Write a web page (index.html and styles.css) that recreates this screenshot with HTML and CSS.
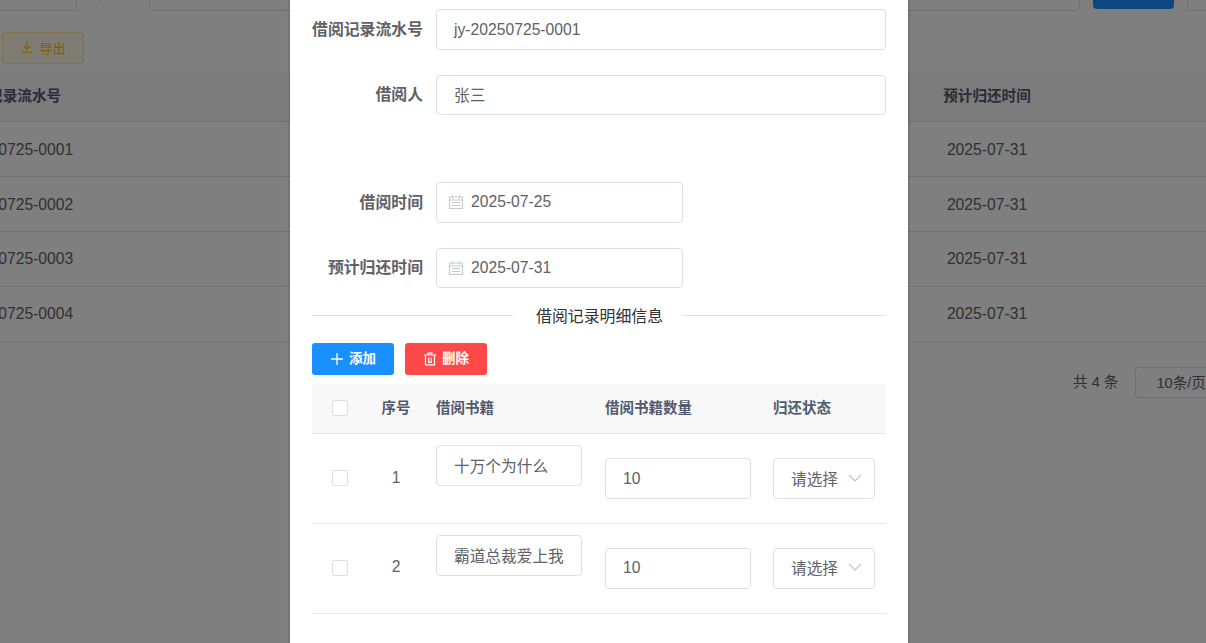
FILE: index.html
```html
<!DOCTYPE html>
<html lang="zh">
<head>
<meta charset="utf-8">
<title>借阅记录</title>
<link rel="stylesheet" href="styles.css">
</head>
<body>
<div class="page">
  <div class="bg">
    <div class="search">
      <div class="s-input s-first"></div>
      <span class="s-label">借阅人</span>
      <div class="s-input s-grow"></div>
      <div class="s-btn"></div>
      <div class="s-input s-last"></div>
    </div>
    <div class="tools">
      <button class="export">
        <svg class="ic" viewBox="0 0 14 14"><path d="M7 1.5v7.5M3.8 6L7 9.2 10.2 6M2 12.3h10" fill="none" stroke="currentColor" stroke-width="1.1"/></svg>
        <span>导出</span>
      </button>
    </div>
    <div class="tbl">
      <div class="tr th"><div class="c1">借阅记录流水号</div><div class="c2"></div><div class="c3">预计归还时间</div></div>
      <div class="tr"><div class="c1">jy-20250725-0001</div><div class="c2"></div><div class="c3">2025-07-31</div></div>
      <div class="tr"><div class="c1">jy-20250725-0002</div><div class="c2"></div><div class="c3">2025-07-31</div></div>
      <div class="tr"><div class="c1">jy-20250725-0003</div><div class="c2"></div><div class="c3">2025-07-31</div></div>
      <div class="tr"><div class="c1">jy-20250725-0004</div><div class="c2"></div><div class="c3">2025-07-31</div></div>
    </div>
    <div class="pager">
      <span class="p-total">共 4 条</span>
      <div class="p-size">10条/页</div>
    </div>
  </div>

  <div class="overlay"></div>

  <div class="dialog">
    <div class="row r1"><label>借阅记录流水号</label><div class="field">jy-20250725-0001</div></div>
    <div class="row r2"><label>借阅人</label><div class="field">张三</div></div>
    <div class="row r3"><label>借阅时间</label>
      <div class="field date">
        <svg class="cal" viewBox="0 0 16 16"><path d="M1.5 3h13v11.5h-13zM1.5 6h13M4.5 1v3.5M11.5 1v3.5M4 8.5h8M4 11.5h8" fill="none" stroke="#c8cad2" stroke-width="1.1"/></svg>
        <span>2025-07-25</span>
      </div>
    </div>
    <div class="row r4"><label>预计归还时间</label>
      <div class="field date">
        <svg class="cal" viewBox="0 0 16 16"><path d="M1.5 3h13v11.5h-13zM1.5 6h13M4.5 1v3.5M11.5 1v3.5M4 8.5h8M4 11.5h8" fill="none" stroke="#c8cad2" stroke-width="1.1"/></svg>
        <span>2025-07-31</span>
      </div>
    </div>
    <div class="divider"><span>借阅记录明细信息</span></div>
    <div class="btns">
      <button class="btn add">
        <svg class="ic" viewBox="0 0 14 14"><path d="M7 1v12M1 7h12" fill="none" stroke="currentColor" stroke-width="1.3"/></svg>
        <span>添加</span>
      </button>
      <button class="btn del">
        <svg class="ic" viewBox="0 0 14 14"><path d="M1 3h12M5 3V1.2h4V3M2.5 3v9.8h9V3M5.7 5.5v4.8h2.6V5.5" fill="none" stroke="currentColor" stroke-width="1.2"/></svg>
        <span>删除</span>
      </button>
    </div>
    <div class="d-table">
      <div class="d-row d-head">
        <div class="d-check"><i class="box"></i></div>
        <div class="d-no">序号</div>
        <div class="d-book">借阅书籍</div>
        <div class="d-qty">借阅书籍数量</div>
        <div class="d-state">归还状态</div>
      </div>
      <div class="d-row d-body">
        <div class="d-check"><i class="box"></i></div>
        <div class="d-no">1</div>
        <div class="d-book"><div class="cell-input up">十万个为什么</div></div>
        <div class="d-qty"><div class="cell-input">10</div></div>
        <div class="d-state"><div class="sel"><span class="sel-text">请选择</span><svg class="chev" viewBox="0 0 14 14"><path d="M1 4l6 6 6-6" fill="none" stroke="#c0c4cc" stroke-width="1.2"/></svg></div></div>
      </div>
      <div class="d-row d-body">
        <div class="d-check"><i class="box"></i></div>
        <div class="d-no">2</div>
        <div class="d-book"><div class="cell-input up">霸道总裁爱上我</div></div>
        <div class="d-qty"><div class="cell-input">10</div></div>
        <div class="d-state"><div class="sel"><span class="sel-text">请选择</span><svg class="chev" viewBox="0 0 14 14"><path d="M1 4l6 6 6-6" fill="none" stroke="#c0c4cc" stroke-width="1.2"/></svg></div></div>
      </div>
    </div>
  </div>
</div>
</body>
</html>
```
FILE: styles.css
```css
* { box-sizing: border-box; }
html, body { margin: 0; height: 100%; overflow: hidden; }
body { font-family: "Liberation Sans", "Noto Sans CJK SC", sans-serif; color: #606266; background: #fff; }
.page { position: relative; width: 1206px; height: 643px; overflow: hidden; }

/* page behind the mask */
.bg { width: 1500px; margin-left: -60px; }
.search { display: flex; align-items: flex-start; height: 41px; margin-top: -30px; }
.s-input { height: 41px; border: 1px solid #dcdfe6; border-radius: 5px; background: #fff; }
.s-first { width: 137px; }
.s-label { width: 64px; margin-left: 8px; padding-top: 13px; font-size: 16px; line-height: 20px; font-weight: 700; text-align: center; color: #606266; white-space: nowrap; }
.s-grow { width: 931px; }
.s-btn { width: 81px; height: 39px; margin-left: 13px; background: #1890ff; border-radius: 4px; }
.s-last { width: 120px; margin-left: 13px; }
.tools { padding: 21px 0 0 62px; height: 62px; }
.export { display: flex; align-items: center; justify-content: center; gap: 5px; width: 82px; height: 32px; padding: 0 0 2px; border: 1px solid #ffe399; border-radius: 3px; background: #fff8e6; color: #ffba00; font: 400 13px "Liberation Sans", "Noto Sans CJK SC", sans-serif; }
.ic { width: 14px; height: 14px; flex: none; }
.tbl { font-size: 15.7px; }
.tr { display: flex; height: 55px; align-items: center; border-bottom: 1px solid #dfe6ec; }
.tr:nth-child(2), .tr:nth-child(3) { padding-top: 2px; }
.tr.th { height: 49px; padding-bottom: 5px; background: #f8f8f9; color: #515a6e; font-size: 14.6px; font-weight: 700; }
.c1 { width: 140px; text-align: center; white-space: nowrap; }
.c2 { width: 820px; }
.c3 { width: 174px; text-align: center; }
.pager { display: flex; align-items: flex-start; height: 31px; margin: 25px 0 0 1133px; font-size: 14.6px; color: #606266; }
.p-total { padding-top: 6px; line-height: 18px; }
.p-size { width: 120px; height: 31px; margin-left: 17px; padding: 6px 0 0 20px; line-height: 18px; border: 1px solid #dcdfe6; border-radius: 3px; white-space: nowrap; }

.overlay { position: absolute; inset: 0; background: rgba(0, 0, 0, .5); }

/* dialog */
.dialog { position: absolute; left: 290px; top: -10px; width: 618px; height: 680px; padding: 19px 22px 0; background: #fff; box-shadow: 0 1px 3px rgba(0, 0, 0, .3); }
.row { display: flex; align-items: center; }
.r1 { height: 41px; }
.r2 { height: 40px; margin-top: 25px; }
.r3 { height: 41px; margin-top: 67px; }
.r4 { height: 40px; margin-top: 25px; }
.row label { width: 111px; margin-right: 13px; padding-bottom: 3px; text-align: right; font-size: 15.85px; font-weight: 700; color: #606266; white-space: nowrap; }
.field { display: flex; align-items: center; flex: 1; height: 100%; padding: 0 0 2px 17px; border: 1px solid #dcdfe6; border-radius: 4px; font-size: 15.7px; color: #606266; }
.r1 .field { padding-bottom: 0; }
.field.date { flex: none; width: 247px; padding-left: 11px; }
.r4 .field.date { padding-bottom: 0; }
.cal { width: 16px; height: 16px; margin-right: 7px; }
.divider { position: relative; height: 1px; margin-top: 27px; background: #dcdfe6; }
.divider span { position: absolute; left: 201px; top: -7px; padding: 0 20px 0 23px; background: #fff; font-size: 15.9px; line-height: 18px; color: #303133; white-space: nowrap; }
.btns { display: flex; gap: 11px; margin-top: 27px; }
.btn { display: flex; align-items: center; justify-content: center; gap: 5px; width: 82px; height: 32px; padding: 0; border: 0; border-radius: 3px; color: #fff; font: 700 13.5px "Liberation Sans", "Noto Sans CJK SC", sans-serif; }
.btn span { margin-top: -4px; }
.add { background: #1890ff; }
.del { background: #ff4949; }

.d-table { margin-top: 9px; }
.d-row { display: flex; align-items: center; border-bottom: 1px solid #e6e8ee; }
.d-head { height: 50px; padding-bottom: 5px; background: #f8f8f9; color: #515a6e; font-size: 14.5px; font-weight: 700; }
.d-head .d-check { margin-top: 3px; }
.d-body { height: 90px; padding-bottom: 2px; font-size: 15.7px; }
.d-body + .d-body { padding-bottom: 4px; }
.d-body + .d-body .d-check { margin-top: 2px; }
.d-check { display: flex; justify-content: center; width: 56px; }
.box { display: block; width: 16px; height: 16px; border: 1px solid #dcdfe6; border-radius: 2px; background: #fff; }
.d-no { width: 56px; margin-right: 12px; text-align: center; }
.d-book { width: 169px; }
.d-qty { width: 168px; }
.d-state { width: 113px; }
.cell-input { display: flex; align-items: center; width: 146px; height: 41px; padding-left: 17px; border: 1px solid #dcdfe6; border-radius: 4px; color: #606266; white-space: nowrap; }
.d-qty .cell-input { margin-top: 2px; }
.d-body + .d-body .d-qty .cell-input { margin-top: 4px; padding-bottom: 2px; }
.cell-input.up { margin-top: -24px; }
.d-body + .d-body .cell-input.up { margin-top: -22px; }
.sel { display: flex; align-items: center; width: 102px; height: 41px; margin-top: 2px; padding-left: 17px; border: 1px solid #dcdfe6; border-radius: 4px; }
.d-body + .d-body .sel { margin-top: 4px; padding-bottom: 2px; }
.sel-text { width: 47px; overflow: hidden; white-space: nowrap; }
.chev { width: 14px; height: 14px; margin: -2px 0 0 10px; }
```
